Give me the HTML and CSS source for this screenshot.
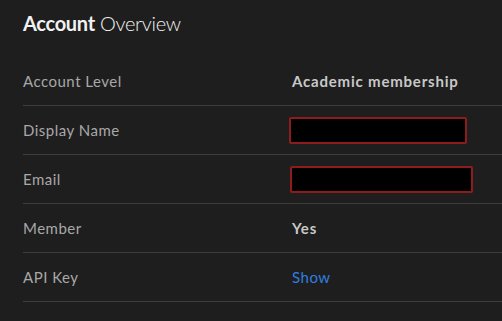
FILE: index.html
```html
<!DOCTYPE html>
<html lang="en">
<head>
    <meta charset="UTF-8">
    <meta name="viewport" content="width=device-width, initial-scale=1.0">
    <title>Account Overview</title>
    <link rel="stylesheet" href="styles.css">
</head>
<body>
    <h1 class="title"><strong>Account</strong> Overview</h1>

    <div class="details">
        <div class="row">
            <div class="label">Account Level</div>
            <div class="value bold">Academic membership</div>
        </div>
        <div class="row">
            <div class="label">Display Name</div>
            <div class="value"><span class="redacted name"></span></div>
        </div>
        <div class="row">
            <div class="label">Email</div>
            <div class="value"><span class="redacted email"></span></div>
        </div>
        <div class="row">
            <div class="label">Member</div>
            <div class="value bold">Yes</div>
        </div>
        <div class="row">
            <div class="label">API Key</div>
            <div class="value"><a href="#" class="link">Show</a></div>
        </div>
    </div>
</body>
</html>
```

FILE: styles.css
```css
html, body {
    background-color: #1e1e1e;
}
body {
    font-family: Lato, "Open Sans", sans-serif;
    color: #a8a8a8;
    margin: 0;
    padding: 0 0 0 23px;
}
.title {
    margin: 0;
    height: 57px;
    padding-top: 11px;
    box-sizing: border-box;
    font-size: 20px;
    font-weight: 300;
    color: #f2f2f2;
    letter-spacing: -0.3px;
}
.title strong {
    font-weight: 700;
}
.row {
    display: flex;
    align-items: center;
    height: 48px;
    border-bottom: 1px solid #3e3e3e;
    font-size: 15px;
    letter-spacing: 0.5px;
}
.label {
    width: 269px;
}
.value.bold {
    font-weight: 700;
    color: #c8c8c8;
    letter-spacing: 0.8px;
}
.redacted {
    display: block;
    height: 23px;
    background-color: #000;
    border: 2px solid #8e1c1c;
    border-radius: 2px;
}
.redacted.name {
    width: 174px;
    margin-left: -3px;
}
.email {
    width: 179px;
    margin-left: -2px;
}
.link {
    color: #2f7fe0;
    text-decoration: none;
}
```
